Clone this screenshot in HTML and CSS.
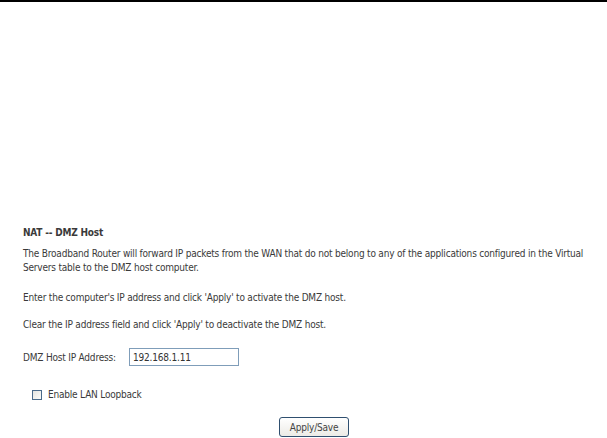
FILE: index.html
```html
<!DOCTYPE html>
<html lang="en">
<head>
    <meta charset="UTF-8">
    <title>NAT -- DMZ Host</title>
    <link rel="stylesheet" href="styles.css">
</head>
<body>
    <div class="topline"></div>
    <form class="content">
        <b class="title">NAT -- DMZ Host</b>
        <p class="text">The Broadband Router will forward IP packets from the WAN that do not belong to any of the applications configured in the Virtual Servers table to the DMZ host computer.</p>
        <p class="text">Enter the computer's IP address and click 'Apply' to activate the DMZ host.</p>
        <p class="text">Clear the IP address field and click 'Apply' to deactivate the DMZ host.</p>
        <div class="field">
            <label for="dmzAddr">DMZ Host IP Address:</label>
            <input type="text" id="dmzAddr" value="192.168.1.11">
        </div>
        <div class="check">
            <input type="checkbox" id="loopback">
            <label for="loopback">Enable LAN Loopback</label>
        </div>
        <div class="buttons">
            <button type="button">Apply/Save</button>
        </div>
    </form>
</body>
</html>
```

FILE: styles.css
```css
body {
    margin: 0;
    background-color: white;
    font-family: "DejaVu Sans Condensed", "DejaVu Sans", sans-serif;
    font-size: 10px;
    letter-spacing: -0.2px;
    color: #3a3a3a;
}
.topline {
    height: 2px;
    background-color: black;
}
.content {
    padding: 224px 14px 0 23px;
}
.title {
    display: block;
    line-height: 14px;
}
.text {
    margin: 7px 0 0 0;
    line-height: 14px;
}
.text + .text {
    margin-top: 16px;
}
.text + .text + .text {
    margin-top: 13px;
}
.field {
    display: flex;
    align-items: center;
    margin-top: 16px;
}
.field label {
    width: 106px;
    white-space: nowrap;
}
.field input {
    box-sizing: border-box;
    width: 110px;
    height: 18px;
    padding: 1px 3px;
    border: 1px solid #7f9db9;
    font-family: inherit;
    font-size: 10px;
    letter-spacing: inherit;
    color: #333;
}
.check {
    display: flex;
    align-items: center;
    margin: 23px 0 0 9px;
}
/* casilla plana como la del router */
.check input {
    appearance: none;
    -webkit-appearance: none;
    box-sizing: border-box;
    width: 10px;
    height: 10px;
    margin: 0 6px 0 0;
    border: 1px solid #4a6a8a;
    background: linear-gradient(135deg, #e4e4e0, #fbfbf9);
}
.buttons {
    text-align: center;
    margin-top: 17px;
    padding-left: 12px;
}
.buttons button {
    width: 70px;
    height: 20px;
    padding: 0;
    font-family: inherit;
    font-size: 10px;
    letter-spacing: inherit;
    color: #444;
    background: linear-gradient(#fff, #ecebe6);
    border: 1px solid #2f4f6f;
    border-radius: 3px;
}
```
